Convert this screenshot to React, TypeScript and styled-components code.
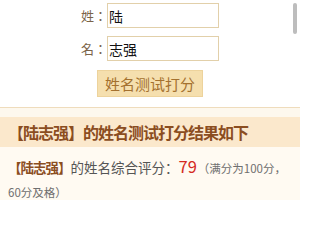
import React from "react";
import styled, { createGlobalStyle } from "styled-components";

const GlobalStyle = createGlobalStyle`
  html, body {
    margin: 0;
    padding: 0;
    background: #ffffff;
  }
  body {
    font-family: "Noto Sans CJK SC", "Noto Sans", sans-serif;
    overflow: hidden;
  }
`;

const Page = styled.div`
  position: relative;
  width: 300px;
  height: 200px;
  overflow: hidden;
`;

const Form = styled.form`
  display: flex;
  flex-direction: column;
  align-items: center;
  padding-top: 3px;
  gap: 8px;
`;

const Row = styled.label`
  display: flex;
  align-items: center;
`;

const Label = styled.span`
  width: 26px;
  font-family: "Noto Sans CJK TC", "Noto Sans CJK SC", sans-serif;
  font-size: 13px;
  color: #7b6449;
  text-align: right;
`;

const Input = styled.input`
  box-sizing: border-box;
  width: 112px;
  height: 25px;
  margin: 0;
  padding: 0 0 0 1px;
  border: 1px solid #e2d0aa;
  border-radius: 0;
  background: #ffffff;
  font-family: "Noto Sans CJK SC", sans-serif;
  font-size: 14px;
  color: #111111;
  outline: none;
`;

const SubmitButton = styled.button`
  box-sizing: border-box;
  margin-top: 1px;
  height: 27px;
  padding: 0 7px;
  border: 1px solid #edd39c;
  border-radius: 0;
  background: #f5dfae;
  font-family: "Noto Sans CJK SC", sans-serif;
  font-size: 15px;
  line-height: 25px;
  color: #a4712f;
`;

const Result = styled.section`
  margin-top: 10px;
  border-top: 1px solid #efdcbc;
  background: #fdf8ee;
  padding-top: 9px;
`;

const ResultTitle = styled.h2`
  margin: 0;
  height: 30px;
  padding-left: 8px;
  background: #fbe8cc;
  font-size: 16px;
  font-weight: bold;
  letter-spacing: -1px;
  line-height: 30px;
  color: #8b4d1f;
  white-space: nowrap;
`;

const ResultBody = styled.p`
  margin: 0;
  padding: 8px 0 0 8px;
  background: #fffaf2;
  font-size: 13.5px;
  line-height: 23px;
  color: #555555;
`;

const Name = styled.strong`
  font-weight: bold;
  letter-spacing: -1px;
  color: #8b4d1f;
`;

const Score = styled.span`
  font-size: 16.5px;
  color: #d42a22;
  margin: 0 1px 0 0;
`;

const Note = styled.span`
  font-size: 11.5px;
  color: #6f6f6f;
`;

const NoBreak = styled.span`
  white-space: nowrap;
`;

const ScrollThumb = styled.div`
  position: absolute;
  top: 3px;
  right: 3px;
  width: 4px;
  height: 31px;
  border-radius: 2px;
  background: #bdbdbd;
`;

const App: React.FC = () => {
  return (
    <Page>
      <GlobalStyle />
      <Form onSubmit={(e) => e.preventDefault()}>
        <Row>
          <Label>姓：</Label>
          <Input defaultValue="陆" />
        </Row>
        <Row>
          <Label>名：</Label>
          <Input defaultValue="志强" />
        </Row>
        <SubmitButton type="submit">姓名测试打分</SubmitButton>
      </Form>
      <Result>
        <ResultTitle>【陆志强】的姓名测试打分结果如下</ResultTitle>
        <ResultBody>
          <Name>【陆志强】</Name>的姓名综合评分：<Score>79</Score>
          <Note>
            （满分为100分，<NoBreak>60分及格）</NoBreak>
          </Note>
        </ResultBody>
      </Result>
      <ScrollThumb />
    </Page>
  );
};

export default App;
